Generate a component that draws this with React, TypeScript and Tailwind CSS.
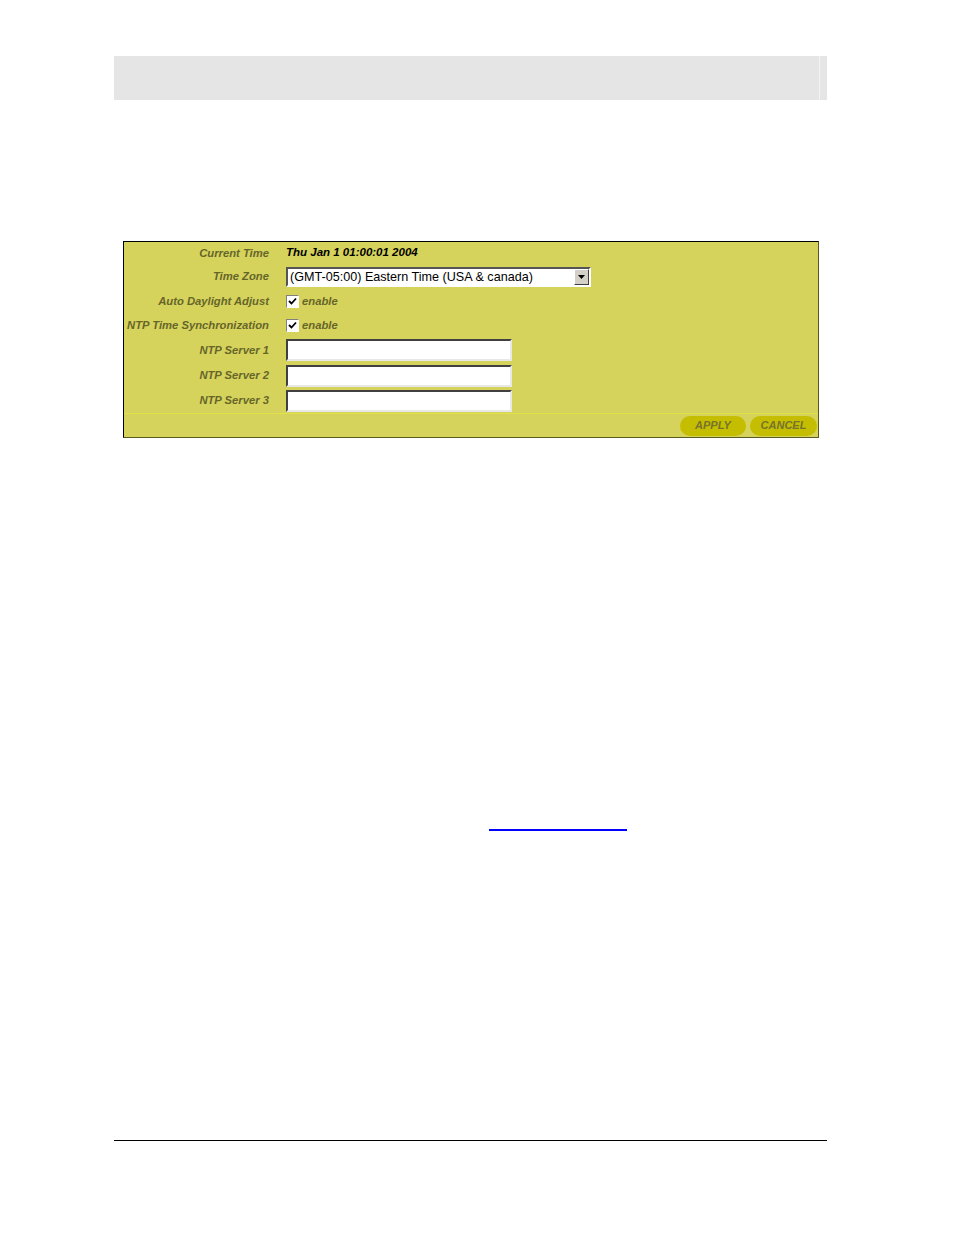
import React from "react";

const rows: { label: string; h: string; kind: string }[] = [
  { label: "Current Time", h: "h-[22px]", kind: "time" },
  { label: "Time Zone", h: "h-[25px]", kind: "zone" },
  { label: "Auto Daylight Adjust", h: "h-[24px]", kind: "check" },
  { label: "NTP Time Synchronization", h: "h-[24px]", kind: "check" },
  { label: "NTP Server 1", h: "h-[26px]", kind: "input" },
  { label: "NTP Server 2", h: "h-[25px]", kind: "input" },
  { label: "NTP Server 3", h: "h-[25px]", kind: "input" },
];

function Check() {
  return (
    <span className="flex h-[13px] w-[13px] items-center justify-center border border-t-[#808080] border-l-[#808080] border-b-white border-r-white bg-white">
      <svg width="9" height="9" viewBox="0 0 9 9">
        <path d="M1 4 L3.5 6.5 L8 1.5" stroke="#000" strokeWidth="1.8" fill="none" />
      </svg>
    </span>
  );
}

function Field({ kind }: { kind: string }) {
  if (kind === "time") {
    return <span className="text-[11.5px] font-bold italic text-black">Thu Jan 1 01:00:01 2004</span>;
  }
  if (kind === "zone") {
    return (
      <div className="flex h-[20px] w-[305px] border-2 border-t-[#555] border-l-[#555] border-b-white border-r-white bg-white">
        <span className="flex-1 pl-[2px] text-[12.6px] leading-[16px] text-black" style={{ fontStyle: "normal", fontWeight: 400 }}>
          (GMT-05:00) Eastern Time (USA &amp; canada)
        </span>
        <span className="flex w-[15px] items-center justify-center border border-t-white border-l-white border-b-[#404040] border-r-[#404040] bg-[#d4d0c8]">
          <svg width="7" height="4" viewBox="0 0 7 4">
            <path d="M0 0 H7 L3.5 4 Z" fill="#000" />
          </svg>
        </span>
      </div>
    );
  }
  if (kind === "check") {
    return (
      <div className="flex items-center gap-[3px]">
        <Check />
        <span>enable</span>
      </div>
    );
  }
  return <div className="h-[22px] w-[226px] border-2 border-t-[#404040] border-l-[#404040] border-b-[#e8e8e8] border-r-[#e8e8e8] bg-white" />;
}

export default function App() {
  return (
    <div className="min-h-[1235px] bg-white" style={{ fontFamily: '"Liberation Sans", Arial, sans-serif' }}>
      <div className="ml-[114px] w-[713px] pt-[56px]">
        <div className="flex h-[44px] bg-[#e5e5e5]">
          <div className="flex-1" />
          <div className="w-px bg-[#f4f4f4]" />
          <div className="w-[7px]" />
        </div>

        <div className="ml-[9px] mt-[141px] w-[696px] border border-t-black border-l-black border-r-[#5a5a1e] border-b-[#5a5a1e] bg-[#d6d35c] text-[11.25px] font-bold italic text-[#66662a]">
          {rows.map((r) => (
            <div key={r.label} className={`flex items-center ${r.h}`}>
              <div className="w-[145px] text-right">{r.label}</div>
              <div className="ml-[17px]">
                <Field kind={r.kind} />
              </div>
            </div>
          ))}
          <div className="h-px bg-[#e4e04a]" />
          <div className="flex h-[23px] items-center justify-end gap-[4px] pr-px">
            <button className="h-[20px] w-[66px] rounded-full bg-[#c5bd00] text-[11px] font-bold italic text-[#76742c]">APPLY</button>
            <button className="h-[20px] w-[67px] rounded-full bg-[#c5bd00] text-[11px] font-bold italic text-[#76742c]">CANCEL</button>
          </div>
        </div>

        <div className="ml-[375px] mt-[391px] h-[2px] w-[138px] bg-[#0000ff]" />

        <div className="mt-[309px] h-px bg-black" />
      </div>
    </div>
  );
}
